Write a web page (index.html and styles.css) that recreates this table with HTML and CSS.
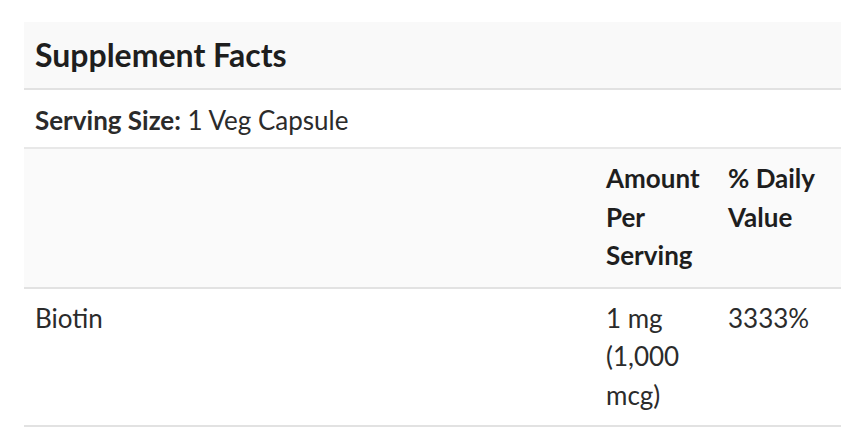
FILE: index.html
```html
<!DOCTYPE html>
<html>
<head>
<meta charset="utf-8">
<link rel="stylesheet" href="styles.css">
</head>
<body>
<div class="wrap">
  <div class="facts">
    <div class="title">Supplement Facts</div>
    <div class="serving"><b>Serving Size:</b> 1 Veg Capsule</div>
    <table class="grid">
      <colgroup>
        <col class="c-name"><col class="c-amt"><col class="c-dv">
      </colgroup>
      <thead>
        <tr><th></th><th>Amount Per Serving</th><th>% Daily Value</th></tr>
      </thead>
      <tbody>
        <tr><td>Biotin</td><td>1 mg (1,000 mcg)</td><td>3333%</td></tr>
      </tbody>
    </table>
  </div>
</div>
</body>
</html>
```
FILE: styles.css
```css
html, body { margin: 0; padding: 0; background: #fff; }
body { font-family: Lato, "Open Sans", sans-serif; color: #2b2b2b; }
.wrap { padding: 22px 19px 0 24px; }
.facts { width: 817px; }
.title {
  background: #f9f9f9;
  font-size: 32px;
  font-weight: 700;
  color: #1e1e1e;
  padding: 0 11px;
  height: 66px;
  line-height: 66px;
  border-bottom: 2px solid #e2e2e2;
}
.serving {
  font-size: 26px;
  padding: 2px 11px 0;
  height: 55px;
  line-height: 57px;
  border-bottom: 2px solid #e8e8e8;
}
.serving b { font-weight: 700; }
.grid { width: 100%; border-collapse: collapse; font-size: 26px; line-height: 38.5px; }
.c-name { width: 570px; }
.c-amt { width: 122px; }
.c-dv { width: 125px; }
.grid th, .grid td { text-align: left; vertical-align: top; padding: 10px 12px 12px; }
.grid tbody td { padding: 10px 12px 11px; }
.grid thead tr { background: #fafafa; border-bottom: 2px solid #e2e2e2; }
.grid th { font-weight: 700; color: #1e1e1e; }
.grid tbody tr { border-bottom: 2px solid #e2e2e2; }
.grid td:first-child, .grid th:first-child { padding-left: 11px; }
```
